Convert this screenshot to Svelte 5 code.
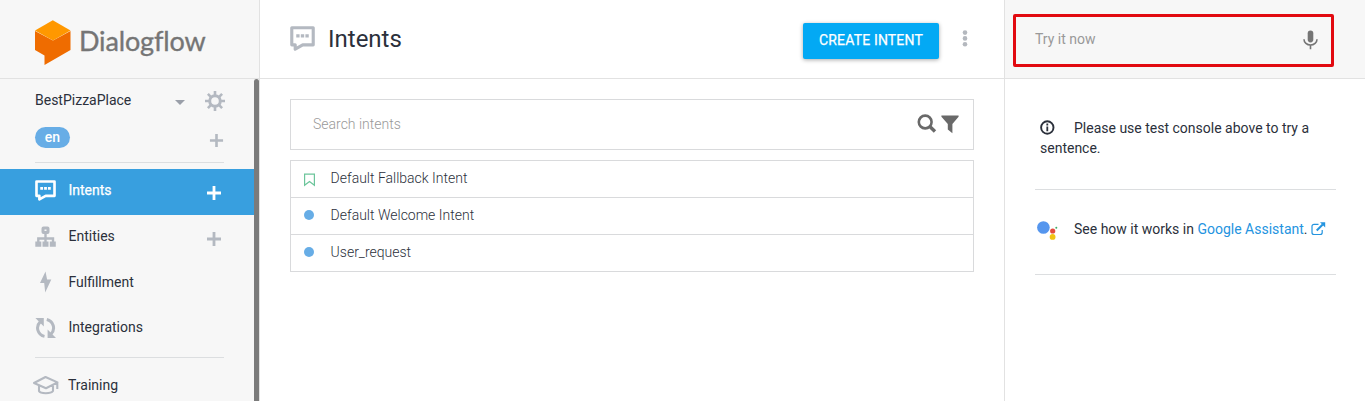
<script>
  const nav = [
    { label: 'Intents', icon: 'chat', add: true, active: true },
    { label: 'Entities', icon: 'tree', add: true },
    { label: 'Fulfillment', icon: 'bolt' },
    { label: 'Integrations', icon: 'sync' }
  ];
  const intents = [
    { name: 'Default Fallback Intent', fallback: true },
    { name: 'Default Welcome Intent' },
    { name: 'User_request' }
  ];
</script>

{#snippet chat()}
  <svg class="chat" viewBox="0 0 24 24" fill="none">
    <path d="M1.7 1.7H22.3V18.1H12.2L5 22.2V18.1H1.7Z" stroke="currentColor" stroke-width="3" stroke-linejoin="round" />
    <path d="M6 8h3.2v3H6zM10.4 8h3.2v3h-3.2zM14.8 8H18v3h-3.2z" fill="currentColor" />
  </svg>
{/snippet}

{#snippet plus()}
  <svg class="plus" viewBox="0 0 16 16"><path d="M8 1v14M1 8h14" stroke="currentColor" stroke-width="2.8" /></svg>
{/snippet}

<div class="app">
  <aside>
    <div class="brand">
      <svg width="36" height="46" viewBox="0 0 36 46">
        <path d="M0 11 18 20.5 35.5 11V30L9.5 45V35.5L0 30Z" fill="#ef6c00" />
        <path d="M17.8.2 35.5 10.5 18 20.5 0 10.5Z" fill="#ff9800" />
      </svg>
      <span>Dialogflow</span>
    </div>
    <div class="side">
      <div class="menu">
        <div class="agent">
          <span>BestPizzaPlace</span>
          <i class="caret"></i>
          <svg class="gear" width="20" height="20" viewBox="0 0 20 20" fill="none" stroke="#b4b9c1">
            <circle cx="10" cy="10" r="5.3" stroke-width="3" />
            <path d="M10 0v4M10 16v4M0 10h4M16 10h4M2.9 2.9l2.9 2.9M14.2 14.2l2.9 2.9M2.9 17.1l2.9-2.9M14.2 5.8l2.9-2.9" stroke-width="2.6" />
          </svg>
        </div>
        <div class="lang"><b>en</b>{@render plus()}</div>
        <hr />
        <nav>
          {#each nav as item}
            <div class="item" class:active={item.active}>
              <span class="ico">
                {#if item.icon === 'chat'}
                  {@render chat()}
                {:else if item.icon === 'tree'}
                  <svg width="22" height="22" viewBox="0 0 22 22" fill="none" stroke="currentColor">
                    <rect x="8" y="2" width="5" height="4.4" rx=".5" stroke-width="3" />
                    <path d="M10.5 7v10M3.3 17v-4.5H18V17" stroke-width="2.4" />
                    <path d="M.3 15.6h6v5.2h-6zM7.5 15.6h6v5.2h-6zM14.8 15.6h6v5.2h-6z" fill="currentColor" stroke="none" />
                  </svg>
                {:else if item.icon === 'bolt'}
                  <svg width="22" height="22" viewBox="0 0 22 22"><path d="M10.5.5 5 12h4.2l1 9.5L16.3 8.6h-4.2Z" fill="currentColor" /></svg>
                {:else}
                  <svg width="22" height="22" viewBox="0 0 22 22" fill="none" stroke="currentColor" stroke-width="3">
                    <path d="M9.5 19.4A8.6 8.6 0 0 1 5.2 4.8M11.8 2.5A8.6 8.6 0 0 1 16 17" />
                    <path d="M.4 1h8.4v8.4ZM21 21h-8.4v-8.4Z" fill="currentColor" stroke="none" />
                  </svg>
                {/if}
              </span>
              <span class="label">{item.label}</span>
              {#if item.add}{@render plus()}{/if}
            </div>
          {/each}
        </nav>
        <hr />
        <div class="item training">
          <span class="ico">
            <svg width="28" height="22" viewBox="0 0 28 22" fill="none" stroke="currentColor" stroke-width="2.1" stroke-linejoin="round">
              <path d="M2 8 13.5 2 25.5 7.4 14 13.2ZM7 10.7V16c1.4 2.9 12 2.9 14 0v-5.3M25.3 7.5V14" />
            </svg>
          </span>
          <span class="label">Training</span>
        </div>
      </div>
      <div class="scroll"></div>
    </div>
  </aside>

  <main>
    <header>
      {@render chat()}
      <h1>Intents</h1>
      <button>CREATE INTENT</button>
      <svg class="dots" width="6" height="18" viewBox="0 0 6 18" fill="#b4b8be"><circle cx="3" cy="2.6" r="2.3" /><circle cx="3" cy="8.4" r="2.3" /><circle cx="3" cy="14.2" r="2.3" /></svg>
    </header>
    <section>
      <div class="search">
        <span>Search intents</span>
        <svg width="20" height="20" viewBox="0 0 20 20" fill="none" stroke="#696969" stroke-width="2.6"><circle cx="8.2" cy="8" r="6.4" /><path d="m12.8 12.4 5.2 5" stroke-width="3.4" /></svg>
        <svg width="18" height="19" viewBox="0 0 18 19"><path d="M.4.5h17.2v1.2L11.4 9v9.3L6.8 14.6V9L.4 1.7Z" fill="#696969" /></svg>
      </div>
      <div class="list">
        {#each intents as intent}
          <div class="row">
            {#if intent.fallback}
              <svg width="11" height="14" viewBox="0 0 11 14"><path d="M.6 1.1h9.8v11.2L5.5 8.5.6 12.3Z" fill="none" stroke="#6cc59b" stroke-width="1.2" /></svg>
            {:else}
              <i></i>
            {/if}
            <span>{intent.name}</span>
          </div>
        {/each}
      </div>
    </section>
  </main>

  <aside class="console">
    <div class="try">
      <div class="input">
        <span>Try it now</span>
        <svg width="16" height="20" viewBox="0 0 16 20" fill="none"><rect x="4.7" y=".4" width="5.6" height="12" rx="2.8" fill="#757575" /><path d="M1 9.2a6.5 5.8 0 0 0 13 0M7.5 15v4.2" stroke="#757575" stroke-width="1.6" /></svg>
      </div>
    </div>
    <div class="tips">
      <p class="hint"><svg width="15" height="15" viewBox="0 0 15 15" fill="none"><circle cx="7.3" cy="7.5" r="6.2" stroke="#2b303b" stroke-width="1.9" /><path d="M7.3 3.6v1.8M7.3 6.5v4.7" stroke="#2b303b" stroke-width="1.8" /></svg>Please use test console above to try a sentence.</p>
      <hr />
      <p class="assist">
        <svg width="22" height="22" viewBox="0 0 22 22"><circle cx="6.4" cy="7.5" r="6.3" fill="#5596ee" /><circle cx="15.7" cy="11" r="2.6" fill="#e34b3d" /><circle cx="15.6" cy="16.9" r="2.9" fill="#f2c313" /><circle cx="19.3" cy="7.7" r="1" fill="#3fae68" /></svg>
        <span>See how it works in <a>Google Assistant</a>.</span>
        <svg class="ext" width="15" height="14" viewBox="0 0 15 14" fill="none" stroke="#2494df"><path d="M7.5 2.3H3a2 2 0 0 0-2 2v6.2a2 2 0 0 0 2 2h6.2a2 2 0 0 0 2-2V8" stroke-width="1.2" /><path d="m5.7 8.5 6-6" stroke-width="2" /><path d="M9 .2h5.2v5.2Z" fill="#2494df" stroke="none" /></svg>
      </p>
      <hr />
    </div>
  </aside>
</div>

<style>
  :global(body) { margin: 0; overflow: hidden; }
  * { box-sizing: border-box; }
  svg { display: block; flex: none; }
  hr { border: 0; margin: 0; height: 1px; background: #dcdee0; }
  .app { display: flex; width: 1365px; height: 401px; overflow: hidden; background: #fff; font: 14px/19px Roboto, sans-serif; color: #2b303b; }
  aside { width: 260px; display: flex; flex-direction: column; background: #f7f7f7; border-right: 1px solid #e2e2e2; flex: none; }
  .brand { height: 79px; border-bottom: 1px solid #e2e2e2; display: flex; padding: 20px 0 0 35px; flex: none; }
  .brand span { font: 27px/42px Lato, sans-serif; color: #757575; margin-left: 8px; letter-spacing: -.15px; -webkit-text-stroke: .35px #757575; }
  .side { display: flex; height: 322px; width: 260px; }
  .menu { width: 254px; }
  .scroll { width: 5px; background: #7b7b7b; border-radius: 3px 3px 0 0; }
  .agent { display: flex; align-items: center; height: 20px; margin: 11px 0 0 35px; }
  .agent span { width: 140px; line-height: 20px; }
  .caret { border: 5px solid transparent; border-top-color: #9a9fa9; border-bottom: 0; margin-top: 4px; }
  .gear { margin: 2px 0 0 20px; }
  .lang { display: flex; justify-content: space-between; align-items: center; margin: 17px 30px 0 35px; height: 21px; color: #b4b9c1; }
  .lang b { background: #67ade6; color: #fff; font-weight: 500; width: 35px; height: 21px; line-height: 20px; text-align: center; border-radius: 11px; }
  .plus { width: 16px; height: 16px; }
  .lang .plus { width: 15px; height: 15px; margin-top: 6px; }
  .menu hr { margin: 14px 30px 0 35px; }
  nav { margin-top: 6px; }
  .item { height: 45.7px; display: flex; align-items: center; padding: 0 32px 2px 35px; }
  .ico { width: 33.5px; color: #b4b9c1; }
  .label { flex: 1; }
  .item .chat { width: 21px; height: 21px; }
  .item .plus { margin-top: 4px; color: #b4b9c1; }
  .item.active { background: #389fdf; color: #fff; -webkit-text-stroke: .25px #fff; }
  .active .ico, .item.active .plus { color: #fff; }
  .menu nav + hr { margin-top: 5px; }
  .menu .training { margin-top: 7px; padding-bottom: 4px; }
  .training .ico { margin-left: -3.5px; width: 36.5px; }
  main { width: 744px; flex: none; }
  header { height: 79px; border-bottom: 1px solid #e2e2e2; display: flex; align-items: center; padding: 0 36px 0 30px; }
  header > .chat { width: 25px; height: 25px; margin-top: -2px; color: #b4b9c1; }
  h1 { font-size: 24px; line-height: 28px; font-weight: 400; margin: 0 auto 0 13px; }
  button { width: 136px; height: 36px; border: 0; border-radius: 2px; padding: 0 0 3px; background: #03a9f4; color: #fff; font: 400 14px Roboto, sans-serif; letter-spacing: .16px; -webkit-text-stroke: .25px #fff; box-shadow: 0 1px 4px #0005; margin: 4px 23px 0 0; }
  section { padding: 20px 30px; }
  .search { height: 51px; border: 1px solid #d9dadc; display: flex; align-items: center; padding: 0 14px 1px 22px; }
  .search span { flex: 1; color: #999; font-weight: 300; }
  .search svg + svg { margin-left: 4px; }
  .list { margin-top: 10px; border: 1px solid #d9dadc; }
  .row { height: 37px; display: flex; align-items: center; padding: 0 13px 2px; }
  .row + .row { border-top: 1px solid #d9dadc; }
  .row:first-child { height: 36px; }
  .row:first-child svg { margin-top: 3px; }
  .row i { width: 10px; height: 10px; border-radius: 50%; background: #67ade6; margin-right: 1px; }
  .row span { margin-left: 15.6px; font-weight: 300; }
  .console { width: 361px; background: #fff; border-right: 0; border-left: 1px solid #e2e2e2; }
  .try { height: 79px; background: #f7f7f7; border-bottom: 1px solid #e2e2e2; padding: 14px 0 0 8px; flex: none; }
  .input { width: 321px; height: 53px; border: 3px solid #e20a10; border-radius: 2px; display: flex; align-items: center; justify-content: space-between; padding: 0 12px 2px 19px; color: #999; }
  .tips { padding: 39px 29px 0 30px; }
  p { margin: 0; }
  .hint { height: 71px; padding-left: 5px; line-height: 20px; }
  .hint svg { display: inline-block; vertical-align: -1.5px; margin-right: 19px; }
  .assist { display: flex; height: 84px; align-items: center; padding: 0 0 5px 2px; }
  .assist svg:first-child { margin-top: 3px; }
  .assist span { margin-left: 15px; white-space: pre; }
  .assist a { color: #2494df; }
  .assist .ext { margin: -2px 0 0 3px; }
</style>
